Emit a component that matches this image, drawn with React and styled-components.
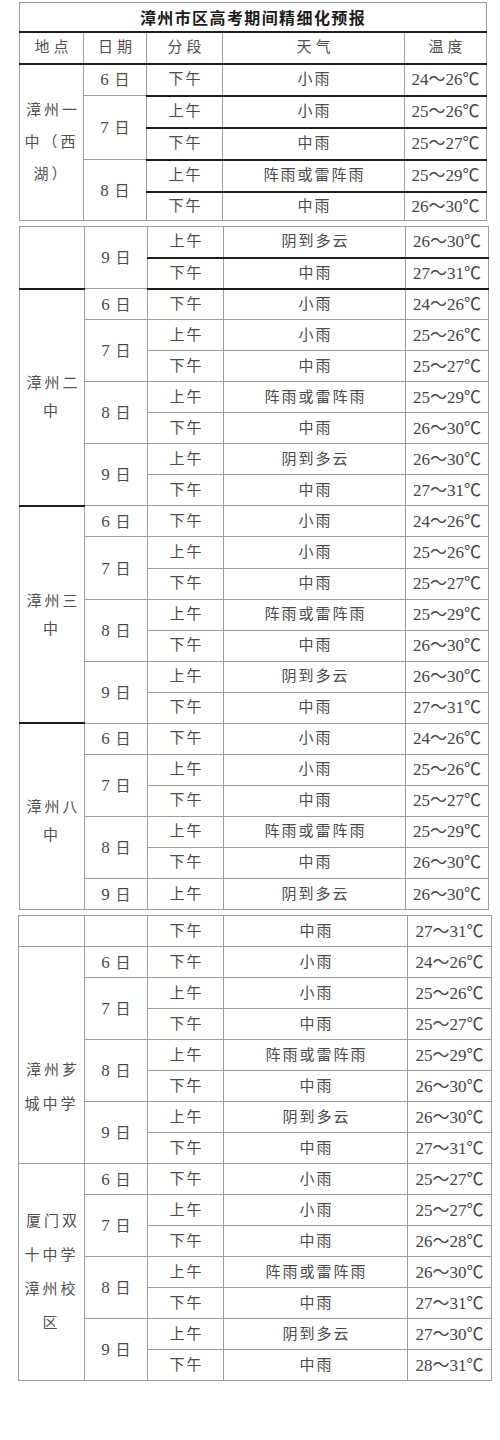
import React from 'react';
import styled, { createGlobalStyle, css } from 'styled-components';

const GlobalStyle = createGlobalStyle`
  html, body {
    margin: 0;
    padding: 0;
    background: #ffffff;
  }
  body {
    font-family: "Liberation Serif", "Noto Sans CJK SC", serif;
    color: #4a4a4a;
  }
`;

const Page = styled.div`
  width: 500px;
  height: 1440px;
  padding-top: 2px;
  box-sizing: border-box;
  display: flex;
  flex-direction: column;
  gap: 5px;
`;

const Sheet = styled.table`
  margin-left: ${p => p.$left}px;
  width: ${p => p.$width}px;
  table-layout: fixed;
  border-collapse: collapse;
  border: 1px solid #7e7e7e;
`;

const Row = styled.tr`
  height: ${p => p.$h}px;
`;

const lineGrey = '1px solid #9c9c9c';
const lineDark = '2px solid #1e1e1e';

const Cell = styled.td`
  padding: 0;
  border: ${lineGrey};
  text-align: center;
  vertical-align: middle;
  font-size: 15px;
  line-height: 1;
  letter-spacing: 2px;
  text-indent: 2px;
  white-space: nowrap;
  ${p => p.$dark && css`border-bottom: ${lineDark};`}
`;

const TitleCell = styled.td`
  padding: 0;
  border: ${lineGrey};
  border-bottom: ${lineDark};
  text-align: center;
  vertical-align: middle;
  font-family: "Noto Sans CJK SC", sans-serif;
  font-size: 16px;
  font-weight: 700;
  letter-spacing: 1.4px;
  color: #1c1c1c;
  padding-top: 1px;
`;

const HeadCell = styled(Cell)`
  border-bottom: ${lineDark};
  letter-spacing: 4px;
  text-indent: 4px;
  color: #505050;
`;

const LocCell = styled(Cell)`
  line-height: ${p => p.$lh}px;
  padding-top: ${p => p.$pad || 0}px;
  letter-spacing: 3px;
  text-indent: 3px;
  color: #505050;
`;

const Num = styled.span`
  font-size: 17px;
  letter-spacing: 0;
`;

const Temp = styled(Cell)`
  font-size: 17px;
  letter-spacing: 0;
  text-indent: 0;
  color: #444;
`;

// data -------------------------------------------------------------
const std = (a, b, c, d, e, f, g) => [
  { d: '6', rows: [['下午', '小雨', a]] },
  { d: '7', rows: [['上午', '小雨', b], ['下午', '中雨', c]] },
  { d: '8', rows: [['上午', '阵雨或雷阵雨', d], ['下午', '中雨', e]] },
  { d: '9', rows: [['上午', '阴到多云', f], ['下午', '中雨', g]] },
];

const T = (a, b) => `${a}～${b}℃`;

const segments = [
  {
    left: 19,
    cols: [64, 63, 76, 182, 82],
    title: '漳州市区高考期间精细化预报',
    rowH: [32, 32, 32, 32, 29],
    groups: [
      {
        loc: ['漳州一', '中（西', '湖）'],
        lh: 32,
        darkRows: true,
        days: std(T(24, 26), T(25, 26), T(25, 27), T(25, 29), T(26, 30)).slice(0, 3),
      },
    ],
  },
  {
    left: 19,
    cols: [65, 63, 76, 182, 83],
    rowH: 31.05,
    groups: [
      {
        loc: [],
        darkRows: true,
        fullDark: true,
        days: [{ d: '9', rows: [['上午', '阴到多云', T(26, 30)], ['下午', '中雨', T(27, 31)]] }],
      },
      {
        loc: ['漳州二', '中'],
        lh: 28,
        locDark: true,
        days: std(T(24, 26), T(25, 26), T(25, 27), T(25, 29), T(26, 30), T(26, 30), T(27, 31)),
      },
      {
        loc: ['漳州三', '中'],
        lh: 28,
        locDark: true,
        days: std(T(24, 26), T(25, 26), T(25, 27), T(25, 29), T(26, 30), T(26, 30), T(27, 31)),
      },
      {
        loc: ['漳州八', '中'],
        lh: 28,
        pad: 8,
        days: (() => {
          const d = std(T(24, 26), T(25, 26), T(25, 27), T(25, 29), T(26, 30), T(26, 30), T(27, 31));
          d[3] = { d: '9', rows: [d[3].rows[0]] };
          return d;
        })(),
      },
    ],
  },
  {
    left: 18,
    cols: [66, 63, 76, 184, 84],
    rowH: 31,
    groups: [
      {
        loc: [],
        days: [{ d: '', rows: [['下午', '中雨', T(27, 31)]] }],
      },
      {
        loc: ['漳州芗', '城中学'],
        lh: 34,
        pad: 64,
        days: std(T(24, 26), T(25, 26), T(25, 27), T(25, 29), T(26, 30), T(26, 30), T(27, 31)),
      },
      {
        loc: ['厦门双', '十中学', '漳州校', '区'],
        lh: 34,
        days: std(T(25, 27), T(25, 27), T(26, 28), T(26, 30), T(27, 31), T(27, 30), T(28, 31)),
      },
    ],
  },
];

const Segment = ({ seg }) => {
  const width = seg.cols.reduce((a, b) => a + b, 0);
  const rows = [];
  let idx = 0;
  seg.groups.forEach((g, gi) => {
    const total = g.days.reduce((a, d) => a + d.rows.length, 0);
    let gr = 0;
    g.days.forEach((day, di) => {
      day.rows.forEach((r, ri) => {
        const h = Array.isArray(seg.rowH) ? seg.rowH[idx] : seg.rowH;
        const isGroupLast = gr === total - 1;
        const dayLast = ri === day.rows.length - 1;
        const dark = (g.darkRows && !(isGroupLast && !g.fullDark)) || (g.fullDark && isGroupLast);
        rows.push(
          <Row key={`${gi}-${di}-${ri}`} $h={h}>
            {gr === 0 && (
              <LocCell rowSpan={total} $lh={g.lh || 30} $pad={g.pad} $dark={g.locDark || g.fullDark}>
                {g.loc.map((l, i) => (
                  <React.Fragment key={i}>
                    {i > 0 && <br />}
                    {l}
                  </React.Fragment>
                ))}
              </LocCell>
            )}
            {ri === 0 && (
              <Cell rowSpan={day.rows.length} $dark={g.fullDark && dayLast && isGroupLast}>
                {day.d && (
                  <>
                    <Num>{day.d}</Num> 日
                  </>
                )}
              </Cell>
            )}
            <Cell $dark={dark}>{r[0]}</Cell>
            <Cell $dark={dark}>{r[1]}</Cell>
            <Temp $dark={dark}>{r[2]}</Temp>
          </Row>
        );
        gr += 1;
        idx += 1;
      });
    });
  });

  return (
    <Sheet $left={seg.left} $width={width}>
      <colgroup>
        {seg.cols.map((c, i) => (
          <col key={i} style={{ width: c }} />
        ))}
      </colgroup>
      <tbody>
        {seg.title && (
          <>
            <Row $h={29}>
              <TitleCell colSpan={5}>{seg.title}</TitleCell>
            </Row>
            <Row $h={32}>
              <HeadCell>地点</HeadCell>
              <HeadCell>日期</HeadCell>
              <HeadCell>分段</HeadCell>
              <HeadCell>天气</HeadCell>
              <HeadCell>温度</HeadCell>
            </Row>
          </>
        )}
        {rows}
      </tbody>
    </Sheet>
  );
};

const App = () => (
  <>
    <GlobalStyle />
    <Page>
      {segments.map((s, i) => (
        <Segment key={i} seg={s} />
      ))}
    </Page>
  </>
);

export default App;
